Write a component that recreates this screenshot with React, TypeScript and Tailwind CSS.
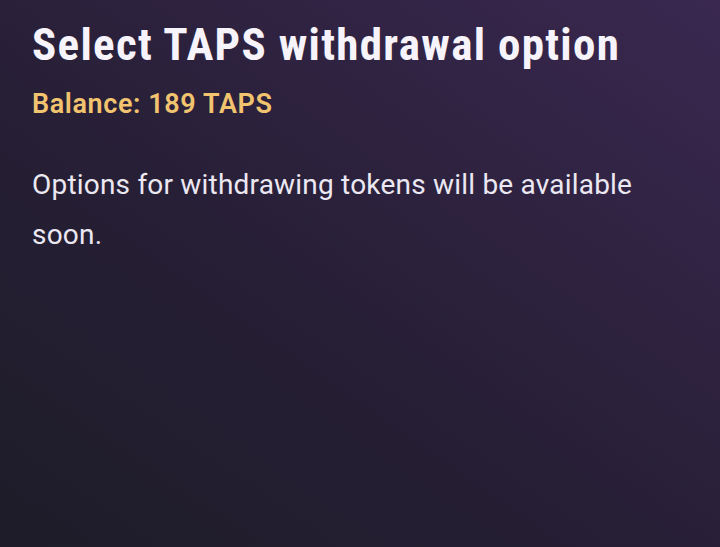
export default function App() {
  return (
    <div
      className="min-h-[547px] w-full bg-[linear-gradient(35deg,#1d1c28_0%,#271f36_45%,#3a2850_100%)] px-8 pt-[19px] text-white"
      style={{ fontFamily: 'Roboto, "Liberation Sans", sans-serif' }}
    >
      <h1 className="text-[45px] font-bold leading-[52px] tracking-[1.3px] text-[#f6f3fa] [font-stretch:75%]">
        Select TAPS withdrawal option
      </h1>
      <p className="mt-4 text-[27px] font-semibold leading-[34px] tracking-[0.6px] text-[#f2c46f] [font-stretch:92%]">
        Balance: 189 TAPS
      </p>
      <p className="mt-[39px] text-[28px] leading-[50px] tracking-[0.2px] text-[#ece8f2]">
        Options for withdrawing tokens will be available soon.
      </p>
    </div>
  )
}
